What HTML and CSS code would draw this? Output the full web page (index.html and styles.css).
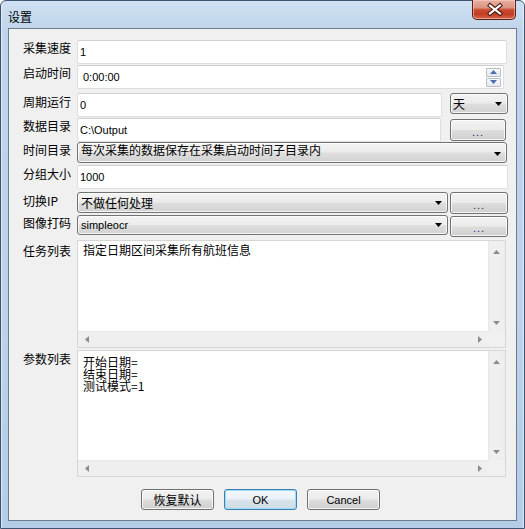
FILE: index.html
```html
<!DOCTYPE html>
<html lang="zh-CN">
<head>
<meta charset="utf-8">
<title>设置</title>
<link rel="stylesheet" href="styles.css">
</head>
<body>
<div class="window">
  <div class="titlebar">
    <span class="title">设置</span>
    <div class="close-btn">
      <svg width="45" height="20" viewBox="0 0 45 20">
        <path d="M18 5.5 L28 13.5 M28 5.5 L18 13.5" stroke="#4a1a12" stroke-width="4.2" stroke-linecap="square" fill="none"/>
        <path d="M18 5.5 L28 13.5 M28 5.5 L18 13.5" stroke="#ffffff" stroke-width="2.2" stroke-linecap="square" fill="none"/>
      </svg>
    </div>
  </div>
  <div class="client">
    <div class="row r1">
      <span class="lbl">采集速度</span>
      <div class="field w430"><span class="lt">1</span></div>
    </div>
    <div class="row r2">
      <span class="lbl">启动时间</span>
      <div class="field spinfield w427">
        <span class="lt">0:00:00</span>
        <div class="spin">
          <div class="spin-btn"><svg width="7" height="4" viewBox="0 0 7 4"><polygon points="0,4 7,4 3.5,0" fill="#4d6cae"/></svg></div>
          <div class="spin-btn"><svg width="7" height="4" viewBox="0 0 7 4"><polygon points="0,0 7,0 3.5,4" fill="#4d6cae"/></svg></div>
        </div>
      </div>
    </div>
    <div class="row r3">
      <span class="lbl">周期运行</span>
      <div class="field w365"><span class="lt">0</span></div>
      <div class="combo small-combo">
        <span class="val">天</span>
        <svg class="arrow" width="7" height="4" viewBox="0 0 7 4"><polygon points="0,0 7,0 3.5,4" fill="#000"/></svg>
      </div>
    </div>
    <div class="row r4">
      <span class="lbl">数据目录</span>
      <div class="field w364"><span class="lt">C:\Output</span></div>
      <div class="btn dots-btn b4">...</div>
    </div>
    <div class="row r5">
      <span class="lbl">时间目录</span>
      <div class="combo w430 timedir">
        <span class="val">每次采集的数据保存在采集启动时间子目录内</span>
        <svg class="arrow" width="7" height="4" viewBox="0 0 7 4"><polygon points="0,0 7,0 3.5,4" fill="#000"/></svg>
      </div>
    </div>
    <div class="row r6">
      <span class="lbl">分组大小</span>
      <div class="field w431"><span class="lt">1000</span></div>
    </div>
    <div class="row r7">
      <span class="lbl">切换IP</span>
      <div class="combo w371 c7">
        <span class="val">不做任何处理</span>
        <svg class="arrow" width="7" height="4" viewBox="0 0 7 4"><polygon points="0,0 7,0 3.5,4" fill="#000"/></svg>
      </div>
      <div class="btn dots-btn b7">...</div>
    </div>
    <div class="row r8">
      <span class="lbl">图像打码</span>
      <div class="combo w371 c8">
        <span class="val lt">simpleocr</span>
        <svg class="arrow" width="7" height="4" viewBox="0 0 7 4"><polygon points="0,0 7,0 3.5,4" fill="#000"/></svg>
      </div>
      <div class="btn dots-btn b8">...</div>
    </div>
    <div class="row r9">
      <span class="lbl lbl-box">任务列表</span>
      <div class="scroll-box task-box">
        <div class="box-text">指定日期区间采集所有航班信息</div>
        <div class="vbar">
          <svg width="7" height="4" viewBox="0 0 7 4"><polygon points="0,4 7,4 3.5,0" fill="#8c8c8c"/></svg>
          <svg width="7" height="4" viewBox="0 0 7 4"><polygon points="0,0 7,0 3.5,4" fill="#8c8c8c"/></svg>
        </div>
        <div class="hbar">
          <svg width="4" height="7" viewBox="0 0 4 7"><polygon points="4,0 4,7 0,3.5" fill="#8c8c8c"/></svg>
          <svg width="4" height="7" viewBox="0 0 4 7"><polygon points="0,0 0,7 4,3.5" fill="#8c8c8c"/></svg>
        </div>
        <div class="corner"></div>
      </div>
    </div>
    <div class="row r10">
      <span class="lbl lbl-box2">参数列表</span>
      <div class="scroll-box param-box">
        <div class="box-text"><div class="pline">开始日期=</div><div class="pline">结束日期=</div><div class="pline">测试模式=1</div></div>
        <div class="vbar">
          <svg width="7" height="4" viewBox="0 0 7 4"><polygon points="0,4 7,4 3.5,0" fill="#8c8c8c"/></svg>
          <svg width="7" height="4" viewBox="0 0 7 4"><polygon points="0,0 7,0 3.5,4" fill="#8c8c8c"/></svg>
        </div>
        <div class="hbar">
          <svg width="4" height="7" viewBox="0 0 4 7"><polygon points="4,0 4,7 0,3.5" fill="#8c8c8c"/></svg>
          <svg width="4" height="7" viewBox="0 0 4 7"><polygon points="0,0 0,7 4,3.5" fill="#8c8c8c"/></svg>
        </div>
        <div class="corner"></div>
      </div>
    </div>
    <div class="button-row">
      <div class="btn push-btn">恢复默认</div>
      <div class="btn push-btn default-btn lt">OK</div>
      <div class="btn push-btn lt">Cancel</div>
    </div>
  </div>
</div>
</body>
</html>
```

FILE: styles.css
```css
* { box-sizing: border-box; }

html, body {
  margin: 0;
  padding: 0;
}

body {
  width: 525px;
  height: 529px;
  overflow: hidden;
  background: #ffffff;
  font-family: "Noto Sans CJK SC", "Liberation Sans", sans-serif;
  font-size: 12px;
  line-height: 12px;
  color: #000;
}

.window {
  width: 525px;
  height: 529px;
  border: 1px solid #3e5470;
  border-radius: 6px 6px 0 0;
  background:
    linear-gradient(90deg, rgba(255,255,255,0.55) 0, rgba(255,255,255,0) 2px, rgba(255,255,255,0) calc(100% - 2px), rgba(255,255,255,0.55) 100%),
    linear-gradient(180deg, #cfe0f2 0%, #bed4eb 6%, #bcd2ea 60%, #b4cce6 100%);
  padding: 0 7px 7px 7px;
  display: flex;
  flex-direction: column;
}

.titlebar {
  height: 27px;
  display: flex;
  align-items: flex-start;
  flex: none;
}

.title {
  padding-top: 10px;
  font-size: 12px;
  line-height: 12px;
}

.close-btn {
  margin-left: auto;
  margin-top: -1px;
  margin-right: 1px;
  width: 44px;
  height: 20px;
  border: 1px solid #5a2219;
  border-top: none;
  border-radius: 0 0 5px 5px;
  background: linear-gradient(180deg, #e9b0a2 0%, #dc9482 40%, #c9492f 52%, #c43d25 75%, #d8674c 100%);
  box-shadow: inset 0 0 0 1px rgba(255,210,200,0.55);
}

.close-btn svg {
  display: block;
  margin-left: -1px;
}

.client {
  flex: 1;
  border: 1px solid #6b7c8f;
  background: #f0f0f0;
  padding: 0 0 0 14px;
  display: flex;
  flex-direction: column;
}

.row {
  display: flex;
  align-items: flex-start;
  flex: none;
}

.lbl {
  width: 54px;
  flex: none;
  padding-top: 2px;
  white-space: nowrap;
}

.lt {
  font-family: "Liberation Sans", "Noto Sans CJK SC", sans-serif;
  font-size: 11px;
}

/* row geometry */
.r1 { margin-top: 11px; height: 24px; }
.r2 { margin-top: 1px; height: 24px; }
.r3 { margin-top: 4px; height: 24px; }
.r3 .lbl { padding-top: 3px; }
.r4 { margin-top: 1px; height: 24px; }
.r5 { margin-top: 0; height: 22px; }
.r6 { margin-top: 1px; height: 24px; }
.r6 .lbl { padding-top: 3px; }
.r7 { margin-top: 3px; height: 22px; }
.r7 .lbl { padding-top: 3px; }
.r8 { margin-top: 1px; height: 22px; }
.r9 { margin-top: 3px; height: 108px; }
.r10 { margin-top: 2px; height: 127px; }

/* text fields */
.field {
  height: 24px;
  background: #ffffff;
  border: 1px solid #dedede;
  border-top-color: #cfcfcf;
  border-radius: 2px;
  display: flex;
  align-items: center;
  padding-left: 2px;
  flex: none;
}

.w430 { width: 430px; }
.w427 { width: 427px; }
.w431 { width: 431px; }
.w365 { width: 365px; }
.w364 { width: 364px; }
.w371 { width: 371px; }

.spinfield {
  height: 24px;
  padding-left: 5px;
  padding-right: 2px;
}

.spin {
  margin-left: auto;
  display: flex;
  flex-direction: column;
  gap: 1px;
}

.spin-btn {
  width: 15px;
  height: 9px;
  border: 1px solid #b7bdc7;
  border-radius: 1px;
  background: linear-gradient(180deg, #f7f8fa 0%, #e6e9ef 100%);
  display: flex;
  align-items: center;
  justify-content: center;
}

.spin-btn svg { display: block; }

/* combos */
.combo {
  height: 21px;
  border: 1px solid #727272;
  border-radius: 3px;
  background: linear-gradient(180deg, #f3f3f3 0%, #ececec 48%, #dedede 52%, #d2d2d2 100%);
  box-shadow: inset 0 0 0 1px rgba(255,255,255,0.75);
  display: flex;
  align-items: center;
  padding: 0 5px 0 3px;
  flex: none;
}

.combo .val {
  flex: 1;
  white-space: nowrap;
}

.combo .arrow {
  display: block;
  flex: none;
}

.small-combo {
  width: 58px;
  height: 21px;
  margin-left: 8px;
  padding-left: 2px;
}

.timedir {
  height: 21px;
  align-items: flex-start;
  padding-top: 1px;
}

.timedir .arrow { margin-top: 8px; }

.c7 { height: 21px; }
.c8 { height: 20px; }

/* buttons */
.btn {
  border: 1px solid #707070;
  border-radius: 3px;
  background: linear-gradient(180deg, #f2f2f2 0%, #ebebeb 48%, #dddddd 52%, #cfcfcf 100%);
  box-shadow: inset 0 0 0 1px rgba(255,255,255,0.8);
  display: flex;
  align-items: center;
  justify-content: center;
  flex: none;
}

.dots-btn {
  width: 56px;
  height: 22px;
  font-family: "Liberation Sans", sans-serif;
  font-size: 11px;
  color: #25256a;
  letter-spacing: 1px;
  padding-top: 3px;
}

.b4 { margin-left: 9px; margin-top: 1px; }
.b7 { margin-left: 2px; width: 58px; }
.b8 { margin-left: 2px; width: 58px; margin-top: 1px; height: 21px; }

/* scroll boxes */
.scroll-box {
  width: 429px;
  border: 1px solid #d6d6d6;
  background: #ffffff;
  display: grid;
  grid-template-columns: 1fr 17px;
  grid-template-rows: 1fr 16px;
  flex: none;
}

.task-box { height: 108px; }
.param-box { height: 127px; }

.lbl-box { padding-top: 5px; }
.lbl-box2 { padding-top: 3px; }

.box-text {
  padding: 3px 0 0 5px;
  line-height: 12px;
}

.param-box .box-text { padding-top: 5px; }

.pline {
  height: 12px;
  line-height: 12px;
  white-space: nowrap;
}

.vbar {
  background: linear-gradient(90deg, #e6e6e6 0, #f0f0f0 2px, #eeeeee 100%);
  display: flex;
  flex-direction: column;
  align-items: center;
  justify-content: space-between;
  padding: 9px 0 6px;
}

.vbar svg, .hbar svg { display: block; }

.hbar {
  background: linear-gradient(180deg, #e6e6e6 0, #f0f0f0 2px, #eeeeee 100%);
  display: flex;
  align-items: center;
  justify-content: space-between;
  padding: 0 6px 0 7px;
}

.corner {
  background: #f0f0f0;
}

.button-row {
  display: flex;
  gap: 10px;
  margin-top: 12px;
  margin-left: 118px;
}

.push-btn {
  width: 73px;
  height: 21px;
}

.default-btn {
  border-color: #3c7fb1;
  box-shadow: inset 0 0 0 1px #9ddcf9;
  background: linear-gradient(180deg, #f2f7fa 0%, #eaf1f6 48%, #d9e3ea 52%, #cfdbe4 100%);
}
```
